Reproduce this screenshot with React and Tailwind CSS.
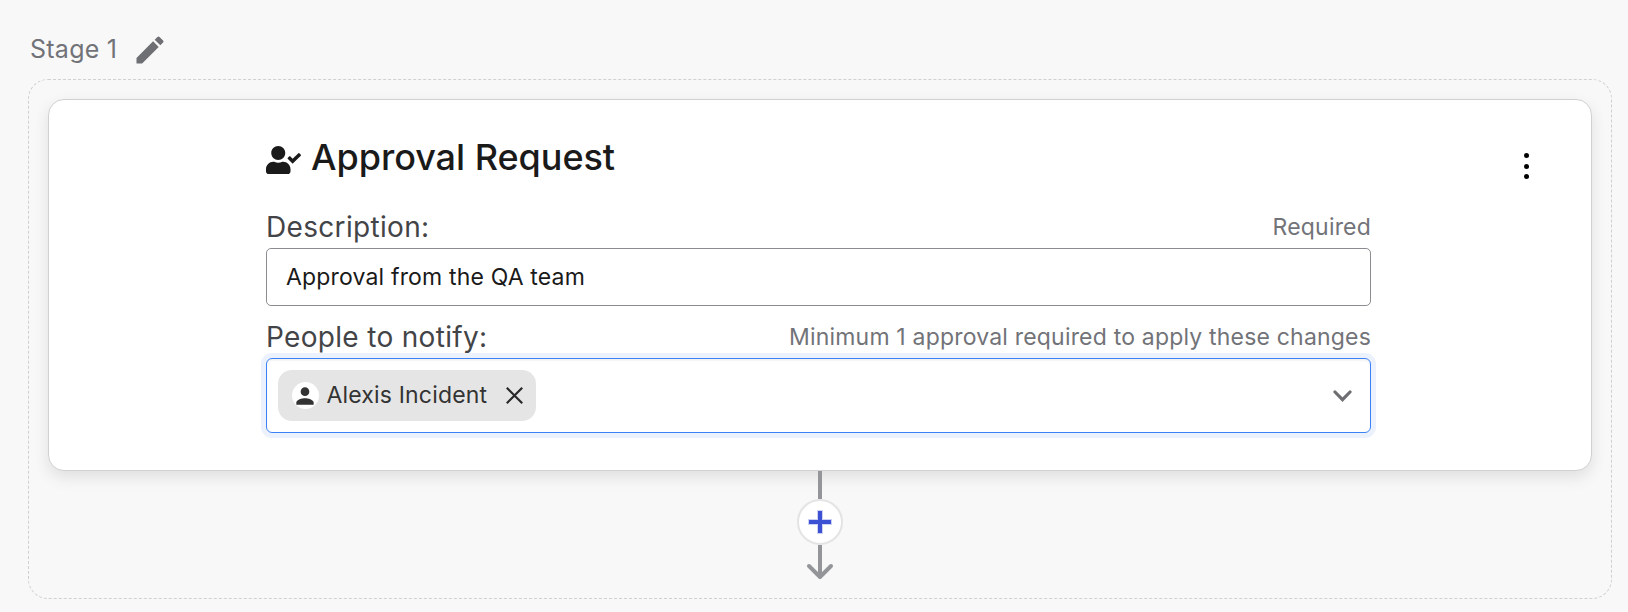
import { FaUserCheck } from "react-icons/fa";
import { MdEdit, MdPerson } from "react-icons/md";

function FieldHeader({ label, hint }) {
  return (
    <div className="flex h-9 items-center justify-between leading-9">
      <label className="text-[28px] tracking-[0.32px] text-[#434447]">{label}</label>
      <span className="text-[23px] tracking-[0.19px] text-[#727378]">{hint}</span>
    </div>
  );
}

function PersonChip({ name }) {
  return (
    <div className="flex h-[51px] w-[258px] items-center rounded-[14px] bg-[#e5e5e5] pl-[13.5px] text-[#333]">
      <span className="flex size-[27px] items-center justify-center rounded-full bg-white">
        <MdPerson size={26} />
      </span>
      <span className="ml-2 w-[168px] text-[23px] tracking-[0.17px]">{name}</span>
      <button className="ml-[11.5px]" aria-label="Remove">
        <svg width="17" height="17" viewBox="0 0 17 17" fill="none" stroke="#262829" strokeWidth="2.2">
          <path d="M.8.8l15.4 15.4M16.2.8L.8 16.2" />
        </svg>
      </button>
    </div>
  );
}

function Connector() {
  return (
    <div className="flex flex-col items-center">
      <div className="h-7 w-1 bg-[#939598]" />
      <button
        className="flex size-[46px] items-center justify-center rounded-full border-2 border-[#e4e4e5] bg-white"
        aria-label="Add"
      >
        <svg width="24" height="24" viewBox="0 0 24 24" fill="none">
          <path d="M12 0v24M0 12h24" stroke="#ccd2f3" strokeWidth="6" />
          <path d="M12 1v22M1 12h22" stroke="#3b50d3" strokeWidth="4" />
        </svg>
      </button>
      <svg width="28" height="35" viewBox="0 0 28 35" fill="none" stroke="#939598" strokeWidth="4">
        <path d="M14 0v32" />
        <path d="M3 21l11 11 11-11" strokeLinecap="round" strokeLinejoin="round" />
      </svg>
    </div>
  );
}

export default function App() {
  return (
    <div className="h-[612px] w-[1628px] overflow-hidden bg-[#f8f8f8] pt-8 pl-7 font-['Inter',sans-serif]">
      <div className="flex h-[47px] items-start pl-0.5">
        <span className="w-[102px] text-[25px] leading-[34px] tracking-[0.25px] text-[#727378]">Stage 1</span>
        <MdEdit size={36} className="text-[#6e6f73]" />
      </div>
      <div className="h-[520px] w-[1584px] rounded-[20px] border border-dashed border-[#d0d0d0] p-[19px]">
        <div className="flex h-[372px] w-[1544px] rounded-2xl border border-[#d0d1d2] bg-white pl-[217px] shadow-[0_6px_16px_rgba(0,0,0,0.1)]">
          <div className="w-[1105px] pt-[33px]">
            <h1 className="flex h-[48px] items-center gap-2.5 text-[36px] font-medium tracking-[-0.03px] text-[#1a1a1a]">
              <FaUserCheck className="mt-1.5 h-7 w-[35px]" />
              Approval Request
            </h1>
            <div className="pt-[28px]">
              <FieldHeader label="Description:" hint="Required" />
              <div className="mt-[3px] flex h-[58px] items-center rounded-[5px] border border-[#8c8d90] px-[19px] text-[23px] tracking-[0.17px] text-[#1a1a1a]">
                Approval from the QA team
              </div>
            </div>
            <div className="pt-[13px]">
              <FieldHeader label="People to notify:" hint="Minimum 1 approval required to apply these changes" />
              <div className="mt-[3px] flex h-[75px] items-center justify-between rounded-[6px] border border-[#3b82f6] pr-[18.5px] pl-[11px] shadow-[0_0_0_5px_#ebf1fd,inset_0_2px_2px_rgba(0,0,0,0.05)]">
                <PersonChip name="Alexis Incident" />
                <svg width="19" height="12" viewBox="0 0 19 12" fill="none" stroke="#6e6f73" strokeWidth="3.2">
                  <path d="M2 2l7.5 7.6L17 2" strokeLinecap="round" />
                </svg>
              </div>
            </div>
          </div>
          <button className="mt-[53px] ml-[153px] flex h-[26px] flex-col items-center justify-between" aria-label="More">
            <span className="size-[5px] rounded-full bg-black" />
            <span className="size-[5px] rounded-full bg-black" />
            <span className="size-[5px] rounded-full bg-black" />
          </button>
        </div>
        <Connector />
      </div>
    </div>
  );
}
